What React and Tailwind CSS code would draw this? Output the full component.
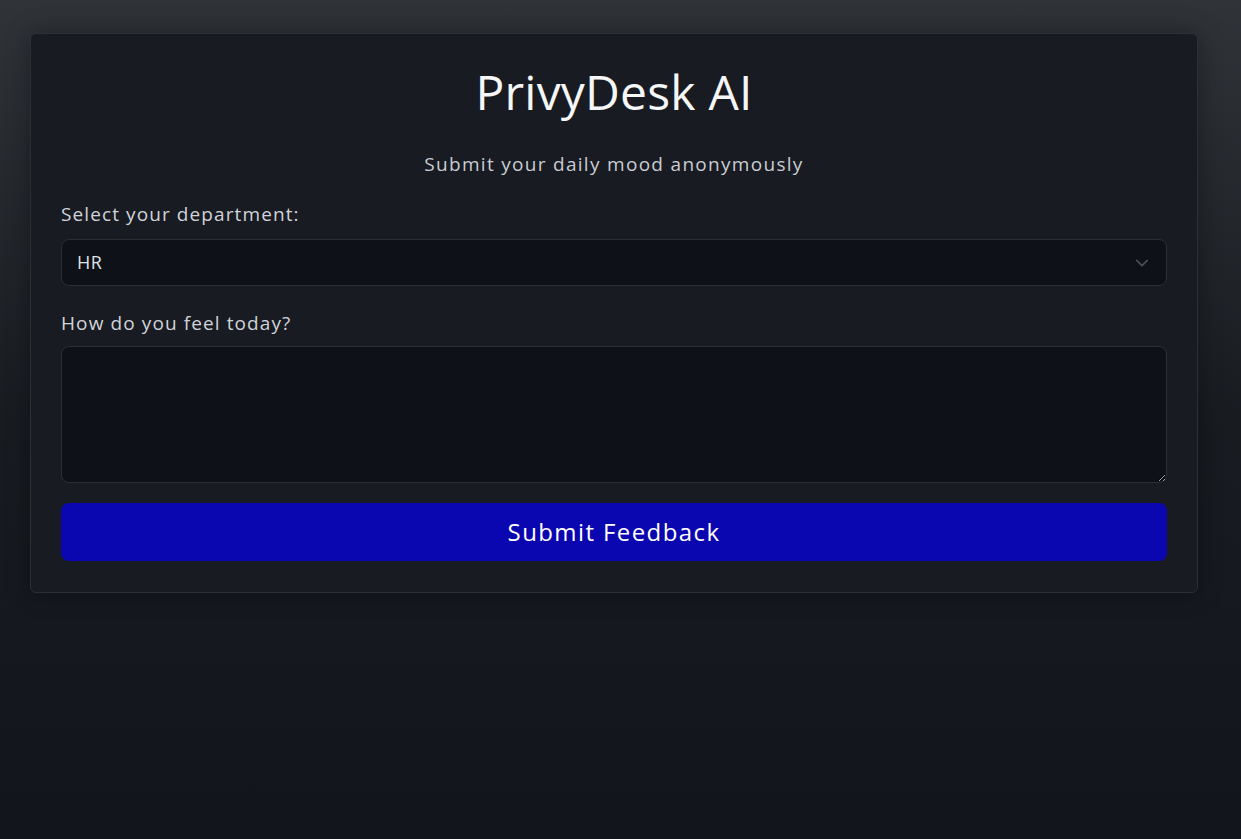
export default function App() {
  const font = { fontFamily: '"Open Sans", "Noto Sans", sans-serif' };

  return (
    <div
      className="min-h-[839px] bg-gradient-to-b from-[#303338] via-[#181b20] to-[#12151b] pl-[30px] pr-[43px] pt-[33px]"
      style={font}
    >
      <div className="rounded-md border border-[#2c2f35] bg-[#181b21] px-[30px] pb-[31px] pt-[26px] shadow-[0_0_24px_rgba(0,0,0,0.35)]">
        {/* Header */}
        <h1 className="text-center text-[48px] leading-[64px] font-normal tracking-[0.2px] text-[#f5f6f7]">
          PrivyDesk AI
        </h1>
        <p className="mt-[27px] text-center text-[19px] leading-[26px] tracking-[1.3px] text-[#c9cdd3]">
          Submit your daily mood anonymously
        </p>

        {/* Department */}
        <label className="mt-[24px] block text-[19px] leading-[26px] tracking-[1.1px] text-[#d0d4da]">
          Select your department:
        </label>
        <div className="relative mt-[12px]">
          <select
            defaultValue="HR"
            className="h-[47px] w-full appearance-none rounded-lg border border-[#2b2e34] bg-[#0e1118] px-[15px] text-[18px] tracking-[0.6px] text-[#dfe2e6] outline-none"
            style={font}
          >
            <option>HR</option>
            <option>Engineering</option>
            <option>Sales</option>
            <option>Marketing</option>
          </select>
          <svg
            className="pointer-events-none absolute right-[18px] top-1/2 -translate-y-1/2"
            width="14"
            height="14"
            viewBox="0 0 16 16"
            fill="none"
            stroke="#4a4e56"
            strokeWidth="2"
            strokeLinecap="round"
            strokeLinejoin="round"
          >
            <path d="M2 5l6 6 6-6" />
          </svg>
        </div>

        {/* Mood */}
        <label className="mt-[24px] block text-[19px] leading-[26px] tracking-[1.1px] text-[#d0d4da]">
          How do you feel today?
        </label>
        <textarea
          className="mt-[10px] block h-[137px] w-full rounded-lg border border-[#2b2e34] bg-[#0e1118] px-[15px] py-[10px] text-[18px] text-[#dfe2e6] outline-none"
          style={font}
        />

        <button
          className="mt-[20px] h-[58px] w-full rounded-lg bg-[#0a06b0] text-[24px] tracking-[1.4px] text-white"
          style={font}
        >
          Submit Feedback
        </button>
      </div>
    </div>
  );
}
